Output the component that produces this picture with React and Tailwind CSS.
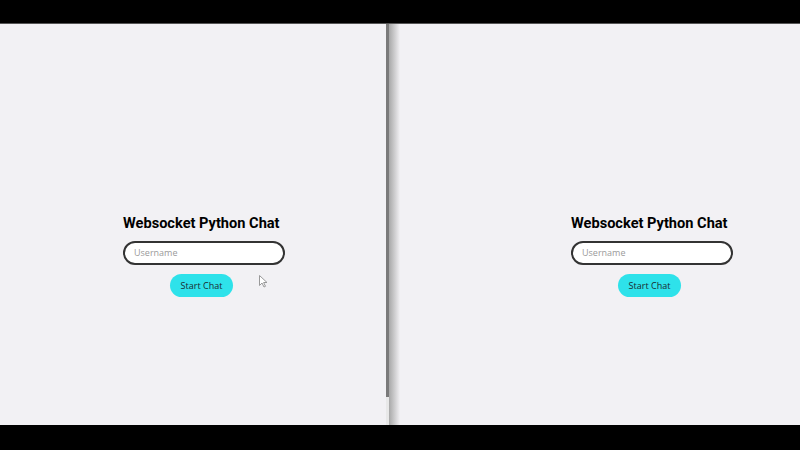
import React from "react";

function ChatLogin({ offset }) {
  return (
    <div className={`flex flex-col items-start pt-[190px] ${offset}`}>
      <h1 className="text-[14.6px] leading-[18px] font-bold text-black [font-family:Roboto,'Liberation_Sans',sans-serif]">
        Websocket Python Chat
      </h1>
      <div className="mt-[9px] w-[162px] h-[24px] rounded-full border-2 border-[#333] bg-white flex items-center pl-[9px]">
        <span className="text-[9px] text-[#9a9a9a] [font-family:'Open_Sans',sans-serif]">Username</span>
      </div>
      <button className="mt-[9px] ml-[47px] w-[63px] h-[23px] rounded-full bg-[#2ee2ea] text-[9px] text-[#1a2a30] [font-family:'Open_Sans',sans-serif]">
        Start Chat
      </button>
    </div>
  );
}

export default function App() {
  return (
    <div className="w-[800px] h-[450px] flex flex-col bg-black overflow-hidden">
      <div className="h-[24px] bg-black border-b border-[#555]" />
      <div className="h-[401px] flex bg-[#f2f1f4]">
        <div className="w-[386px] relative">
          <ChatLogin offset="pl-[123px]" />
          {/* mouse cursor */}
          <svg className="absolute left-[259px] top-[251px]" width="9" height="13" viewBox="0 0 9 13">
            <path d="M0.5 0.5 L0.5 10.5 L3 8 L5 12 L6.5 11.3 L4.6 7.5 L8 7.5 Z" fill="#fff" stroke="#999" strokeWidth="1" />
          </svg>
        </div>
        <div className="w-[3px] flex flex-col">
          <div className="h-[373px] bg-[#7a7a7a]" />
          <div className="flex-1 bg-[#e8e8e8]" />
        </div>
        <div className="w-[11px] bg-gradient-to-r from-[#a8a8a8] to-[#f2f1f4]" />
        <div className="flex-1">
          <ChatLogin offset="pl-[171px]" />
        </div>
      </div>
      <div className="flex-1 bg-black" />
    </div>
  );
}
